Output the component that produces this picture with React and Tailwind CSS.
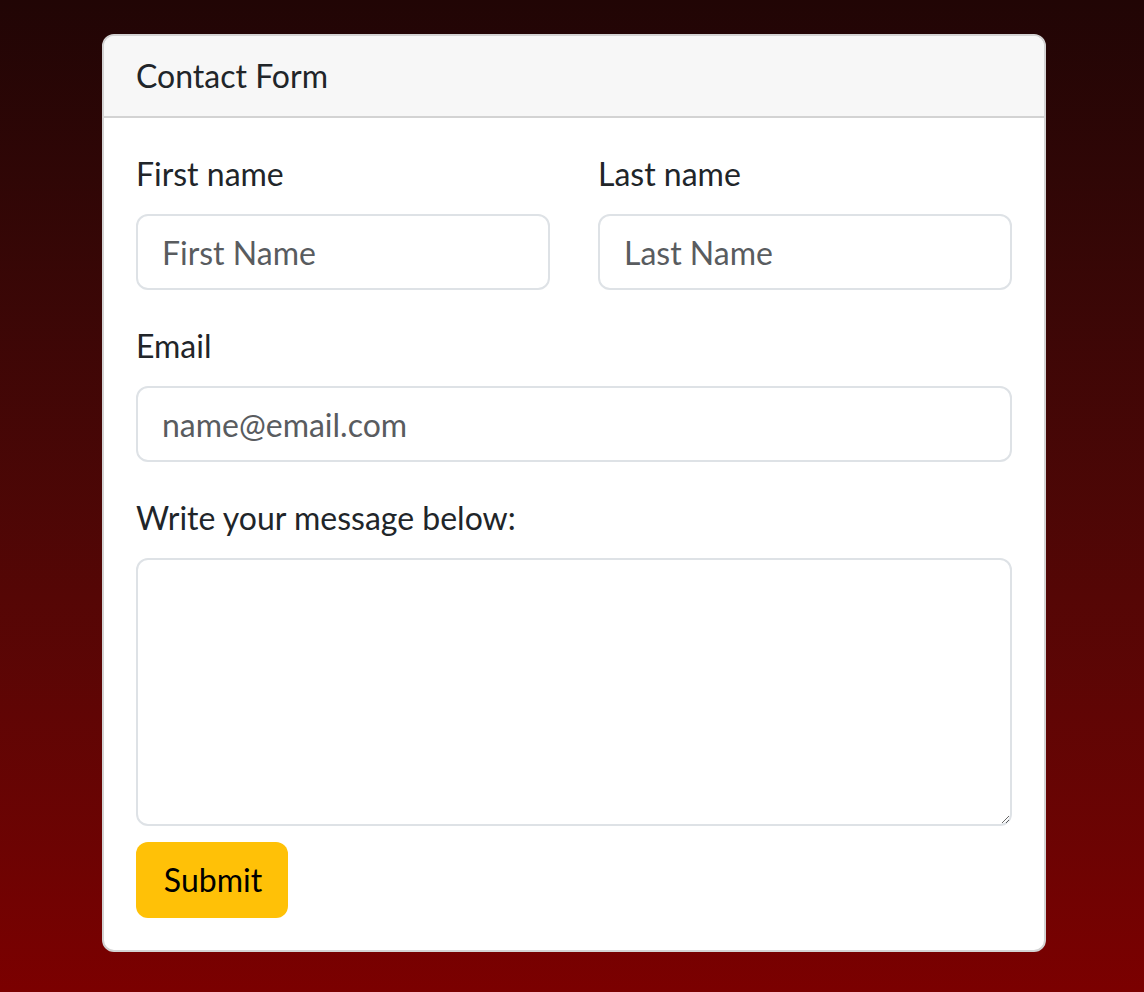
const inputCls =
  "block w-full h-[76px] px-[24px] py-[12px] rounded-[12px] border-2 border-[#dee2e6] bg-white text-[32px] leading-[48px] text-[#212529] placeholder:text-[#595c5f] outline-none";

const Field = ({ label, placeholder, type = "text" }) => (
  <div>
    <label className="block mb-[16px] leading-[48px]">{label}</label>
    <input type={type} placeholder={placeholder} className={inputCls} />
  </div>
);

const App = () => {
  return (
    <div
      className="w-full min-h-[992px] bg-gradient-to-b from-[#210505] to-[#7b0000] pt-[34px] pb-[40px] text-[32px] text-[#212529]"
      style={{ fontFamily: "'Segoe UI', Lato, 'Open Sans', sans-serif" }}
    >
      <div className="ml-[102px] w-[944px] bg-white border-2 border-[#d3d3d3] rounded-[12px] overflow-hidden">
        <div className="bg-[#f7f7f7] border-b-2 border-[#d3d3d3] px-[32px] py-[16px] leading-[48px]">
          Contact Form
        </div>
        <form className="p-[32px]" onSubmit={(e) => e.preventDefault()}>
          <div className="grid grid-cols-2 gap-x-[48px] mb-[32px]">
            <Field label="First name" placeholder="First Name" />
            <Field label="Last name" placeholder="Last Name" />
          </div>
          <div className="mb-[32px]">
            <Field label="Email" placeholder="name@email.com" type="email" />
          </div>
          <div className="mb-[16px]">
            <label className="block mb-[16px] leading-[48px]">
              Write your message below:
            </label>
            <textarea className="block w-full h-[268px] px-[24px] py-[12px] rounded-[12px] border-2 border-[#dee2e6] bg-white text-[32px] leading-[48px] outline-none" />
          </div>
          <button
            type="submit"
            className="h-[76px] w-[152px] pl-[2px] rounded-[12px] bg-[#ffc107] text-black leading-[48px] text-center"
          >
            Submit
          </button>
        </form>
      </div>
    </div>
  );
};

export default App;
